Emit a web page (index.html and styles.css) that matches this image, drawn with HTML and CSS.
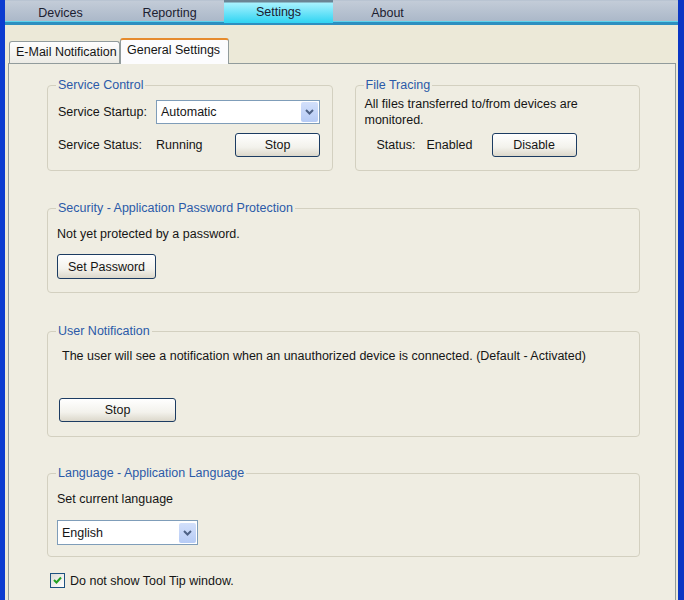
FILE: index.html
```html
<!DOCTYPE html>
<html lang="en">
<head>
  <meta charset="UTF-8">
  <title>Settings</title>
  <link rel="stylesheet" href="styles.css">
</head>
<body>
<div class="window">

  <div class="nav">
    <div class="nav-item">Devices</div>
    <div class="nav-item">Reporting</div>
    <div class="nav-item active">Settings</div>
    <div class="nav-item">About</div>
  </div>

  <div class="client">
    <div class="tabs">
      <div class="tab">E-Mail Notification</div>
      <div class="tab selected">General Settings</div>
    </div>

    <div class="panel">

      <div class="row">
        <div class="group service">
          <span class="group-title">Service Control</span>
          <div class="line">
            <span class="label-col">Service Startup:</span>
            <div class="combo combo-startup">
              <span>Automatic</span>
              <span class="combo-btn">
                <svg width="9" height="6" viewBox="0 0 9 6"><path d="M1 1 L4.5 4.5 L8 1" fill="none" stroke="#4d6185" stroke-width="2"/></svg>
              </span>
            </div>
          </div>
          <div class="line line-status">
            <span class="label-col">Service Status:</span>
            <span class="value-col">Running</span>
            <button class="btn btn-stop">Stop</button>
          </div>
        </div>

        <div class="group tracing">
          <span class="group-title">File Tracing</span>
          <p class="desc">All files transferred to/from devices are<br>monitored.</p>
          <div class="line line-trace">
            <span class="trace-label">Status:</span>
            <span class="trace-value">Enabled</span>
            <button class="btn btn-disable">Disable</button>
          </div>
        </div>
      </div>

      <div class="group security">
        <span class="group-title">Security - Application Password Protection</span>
        <p class="text">Not yet protected by a password.</p>
        <button class="btn btn-password">Set Password</button>
      </div>

      <div class="group notify">
        <span class="group-title">User Notification</span>
        <p class="text notify-text">The user will see a notification when an unauthorized device is connected. (Default - Activated)</p>
        <button class="btn btn-notify">Stop</button>
      </div>

      <div class="group language">
        <span class="group-title">Language - Application Language</span>
        <p class="text">Set current language</p>
        <div class="combo combo-lang">
          <span>English</span>
          <span class="combo-btn">
            <svg width="9" height="6" viewBox="0 0 9 6"><path d="M1 1 L4.5 4.5 L8 1" fill="none" stroke="#4d6185" stroke-width="2"/></svg>
          </span>
        </div>
      </div>

      <label class="check">
        <span class="check-box">
          <svg width="11" height="11" viewBox="0 0 11 11"><path d="M2 5 L4.5 7.5 L9 2.5" fill="none" stroke="#21a121" stroke-width="2"/></svg>
        </span>
        Do not show Tool Tip window.
      </label>

    </div>
  </div>

</div>
</body>
</html>
```
FILE: styles.css
```css
body {
  margin: 0;
  font-family: "Liberation Sans", Arial, sans-serif;
  font-size: 12.5px;
  color: #151515;
  background: #ece9d8;
}
p {
  margin: 0;
}
.window {
  height: 600px;
  border-left: 5px solid #0b3bd0;
  border-right: 6px solid #0a36c4;
  background: #ece9d8;
  overflow: hidden;
}

/* top navigation */
.nav {
  display: flex;
  height: 21px;
  padding-left: 1px;
  background: linear-gradient(#c3ccd8, #aab7c8);
  border-top: 1px solid #b9c4d2;
  border-bottom: 3px solid #2d8fc0;
  box-shadow: inset 0 -1px 0 #5fd3ec;
}
.nav-item {
  width: 109px;
  text-align: center;
  line-height: 24px;
  color: #1c2030;
}
.nav-item.active {
  background: linear-gradient(#6b8494 0, #6b8494 2px, #a8f2ff 3px, #2fd4f2 100%);
  height: 23px;
  margin-top: -1px;
  margin-bottom: -1px;
}

/* inner tabs */
.client {
  padding: 12px 2px 0 3px;
}
.tabs {
  display: flex;
  align-items: flex-end;
  height: 26px;
  padding-left: 1px;
}
.tab {
  height: 21px;
  line-height: 21px;
  padding: 0 6px;
  width: 97px;
  border: 1px solid #919b9c;
  border-bottom: none;
  border-radius: 3px 3px 0 0;
  background: linear-gradient(#fefefe, #ecebe5);
  white-space: nowrap;
}
.tab.selected {
  width: 95px;
  height: 24px;
  line-height: 21px;
  margin-bottom: -1px;
  border-top: 2px solid #e68b2c;
  background: #fcfcfe;
  position: relative;
  z-index: 1;
}
.panel {
  height: 560px;
  border: 1px solid #919b9c;
  background: #efede2;
  padding: 21px 35px 0 38px;
}

/* group boxes */
.group {
  position: relative;
  border: 1px solid #d3d0c0;
  border-radius: 4px;
  box-sizing: border-box;
}
.group-title {
  position: absolute;
  top: -9px;
  left: 8px;
  padding: 0 2px;
  background: #efede2;
  color: #2b5aa8;
  line-height: 16px;
}
.row {
  display: flex;
  gap: 22px;
}
.service, .tracing {
  width: 286px;
  height: 86px;
}
.service {
  padding: 14px 0 0 10px;
}
.line {
  display: flex;
  align-items: center;
}
.label-col {
  width: 98px;
}
.value-col {
  width: 79px;
}
.line-status {
  margin-top: 9px;
}

.tracing {
  padding: 10px 0 0 9px;
}
.desc {
  line-height: 16px;
}
.line-trace {
  margin-top: 5px;
  padding-left: 12px;
}
.trace-label {
  width: 50px;
}
.trace-value {
  width: 65px;
}

.security {
  margin-top: 37px;
  height: 85px;
  padding: 17px 0 0 9px;
}
.notify {
  margin-top: 38px;
  height: 106px;
  padding: 16px 0 0 14px;
}
.language {
  margin-top: 36px;
  height: 84px;
  padding: 17px 0 0 9px;
}
.text {
  line-height: 17px;
}

/* xp buttons */
.btn {
  font-family: inherit;
  font-size: 12.5px;
  color: #151515;
  height: 24px;
  border: 1px solid #1c3c62;
  border-radius: 3px;
  background: linear-gradient(#ffffff, #f3f2ec 60%, #dcd8cb);
  padding: 0;
}
.btn-stop, .btn-disable {
  width: 85px;
}
.btn-password {
  width: 99px;
  height: 25px;
  margin-top: 11px;
}
.btn-notify {
  width: 117px;
  margin-top: 33px;
  margin-left: -3px;
}

/* combo boxes */
.combo {
  display: flex;
  align-items: center;
  justify-content: space-between;
  height: 24px;
  box-sizing: border-box;
  border: 1px solid #7f9db9;
  background: #fff;
  padding: 0 1px 0 4px;
}
.combo-startup {
  width: 164px;
}
.combo-lang {
  width: 141px;
  height: 25px;
  margin-top: 12px;
}
.combo-btn {
  display: flex;
  align-items: center;
  justify-content: center;
  width: 17px;
  height: 20px;
  background: linear-gradient(#d3e0fb, #b6cbf5);
  border-radius: 2px;
}

/* checkbox */
.check {
  display: flex;
  align-items: center;
  gap: 5px;
  margin: 16px 0 0 3px;
}
.check-box {
  display: flex;
  align-items: center;
  justify-content: center;
  width: 13px;
  height: 13px;
  border: 1px solid #1c5180;
  background: linear-gradient(135deg, #dcdcd7, #ffffff);
}
```
